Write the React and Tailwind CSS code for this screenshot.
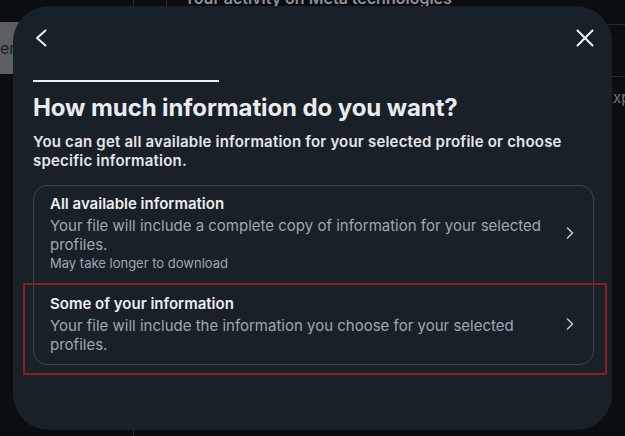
import React from 'react';

const font = { fontFamily: 'Inter, Roboto, "Noto Sans", Arial, sans-serif' };

const Chevron = () => (
  <svg width="24" height="24" viewBox="0 0 24 24" fill="none" stroke="#c3cad0" strokeWidth="1.5" strokeLinecap="round" strokeLinejoin="round">
    <polyline points="9.5,7 14.5,12 9.5,17" />
  </svg>
);

const options = [
  {
    title: 'All available information',
    description: 'Your file will include a complete copy of information for your selected profiles.',
    note: 'May take longer to download',
  },
  {
    title: 'Some of your information',
    description: 'Your file will include the information you choose for your selected profiles.',
    highlight: true,
  },
];

const App = () => {
  return (
    <div className="relative w-[625px] h-[436px] overflow-hidden bg-[#0a0e11] flex" style={font}>
      {/* page behind the dialog */}
      <div className="w-[134px] shrink-0 border-r border-[#252b30] pt-[22px]">
        <div className="h-[52px] bg-[#5c5e61] flex items-center text-[16px] text-[#1e2124]">er</div>
      </div>
      <div className="flex-1 flex flex-col">
        <div className="h-[24px] ml-[32px] border-l border-[#252b30] pl-[17px] overflow-hidden">
          <div className="-mt-[14px] text-[16px] font-semibold text-[#8e9296] whitespace-nowrap">Your activity on Meta technologies</div>
        </div>
        <div className="h-[53px] border-t border-b border-[#252b30]"></div>
        <div className="pl-[470px] pt-[10px] text-[15px] text-[#6e7378] whitespace-nowrap">Expe</div>
      </div>

      {/* dialog */}
      <div className="absolute left-[13px] top-[6px] w-[599px] h-[424px] rounded-[36px] bg-[#182128]">
        <div className="flex items-center justify-between pt-[22px] pl-[19px] pr-[17px]">
          <svg width="20" height="20" viewBox="0 0 20 20" fill="none" stroke="#f2f3f5" strokeWidth="2" strokeLinecap="round" strokeLinejoin="round">
            <polyline points="13.5,2.5 5,10 13.5,17.5" />
          </svg>
          <svg width="20" height="20" viewBox="0 0 20 20" fill="none" stroke="#f2f3f5" strokeWidth="2" strokeLinecap="round">
            <line x1="2.5" y1="2.5" x2="17.5" y2="17.5" />
            <line x1="17.5" y1="2.5" x2="2.5" y2="17.5" />
          </svg>
        </div>

        <div className="pl-[20px] pr-[18px]">
          <div className="mt-[32px] h-[2px] w-[186px] bg-[#eef0f2]"></div>
          <h1 className="mt-[11px] text-[24px] leading-[30px] font-bold tracking-[-0.1px] text-[#e9ebee]">How much information do you want?</h1>
          <p className="mt-[9px] text-[15px] leading-[19px] font-semibold tracking-[0.2px] text-[#e4e6e9]">
            You can get all available information for your selected profile or choose specific information.
          </p>

          <div className="mt-[15px] rounded-[14px] border border-[#3b4750]">
            {options.map((o, i) => (
              <div key={i} className={`relative flex items-center pl-[16px] pr-[11px] ${i > 0 ? 'border-t border-[#3b4750] pt-[9px] pb-[10px]' : 'pt-[8px] pb-[12px]'}`}>
                <div className="flex-1 pr-[12px]">
                  <div className="text-[15px] leading-[20px] font-semibold text-[#eceef0]">{o.title}</div>
                  <div className="mt-[2px] text-[15px] leading-[19px] text-[#9ea8b1]">{o.description}</div>
                  {o.note && <div className="mt-[1px] text-[13px] leading-[17px] text-[#9ea8b1]">{o.note}</div>}
                </div>
                <Chevron />
                {o.highlight && (
                  <div className="absolute -left-[11px] -right-[14px] -top-[2px] -bottom-[11px] border-2 border-[#8f1c1f] pointer-events-none"></div>
                )}
              </div>
            ))}
          </div>
        </div>
      </div>
    </div>
  );
};

export default App;
